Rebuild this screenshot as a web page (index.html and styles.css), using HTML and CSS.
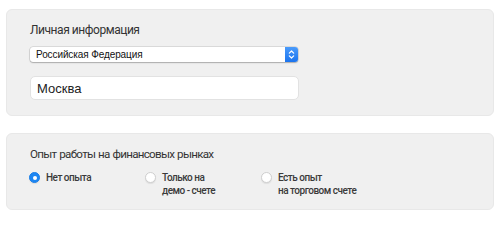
FILE: index.html
```html
<!DOCTYPE html>
<html lang="ru">
<head>
<meta charset="utf-8">
<link rel="stylesheet" href="styles.css">
</head>
<body>
<section class="panel panel-personal">
  <h2 class="panel-title title-personal">Личная информация</h2>
  <div class="select">
    <span class="select-value">Российская Федерация</span>
    <span class="select-arrow">
      <svg width="13" height="15" viewBox="0 0 13 15"><path d="M4.3 6.2 L6.5 4 L8.7 6.2 M4.3 8.8 L6.5 11 L8.7 8.8" fill="none" stroke="#fff" stroke-width="1.2" stroke-linecap="round" stroke-linejoin="round"/></svg>
    </span>
  </div>
  <div class="input">Москва</div>
</section>
<section class="panel panel-exp">
  <h2 class="panel-title title-exp">Опыт работы на финансовых рынках</h2>
  <div class="radios">
    <label class="radio-item"><span class="radio checked"></span><span class="radio-label">Нет опыта</span></label>
    <label class="radio-item"><span class="radio"></span><span class="radio-label">Только на<br>демо - счете</span></label>
    <label class="radio-item"><span class="radio"></span><span class="radio-label">Есть опыт<br>на торговом счете</span></label>
  </div>
</section>
</body>
</html>
```
FILE: styles.css
```css
html, body { margin: 0; padding: 0; background: #fff; }
body { padding: 9px 6px 0 6px; font-family: Roboto, "Liberation Sans", sans-serif; color: #333; }
.panel {
  background: #f0f0f0;
  border: 1px solid #e8e8e8;
  border-radius: 6px;
  box-sizing: border-box;
  width: 488px;
  padding: 13px 23px 0 23px;
}
.panel-personal { height: 107px; }
.panel-exp { margin-top: 17px; height: 77px; }
.panel-title {
  margin: 0;
  font-size: 12px;
  line-height: 15px;
  font-weight: 400;
  color: #333;
}
.title-personal { letter-spacing: -0.45px; }
.title-exp { font-size: 11.6px; letter-spacing: -0.7px; word-spacing: 0.6px; }
.select {
  margin-top: 9px;
  width: 268px;
  height: 15px;
  background: #fff;
  border-radius: 3px;
  box-shadow: 0 0 0 0.5px rgba(0,0,0,0.18), 0 1px 1.5px rgba(0,0,0,0.22);
  display: flex;
  align-items: center;
  justify-content: space-between;
  font-family: "Liberation Sans", Arial, sans-serif;
  font-size: 10px;
  color: #111;
}
.select-value { padding-left: 6px; letter-spacing: -0.1px; }
.select-arrow {
  width: 13px;
  height: 15px;
  display: flex;
  border-radius: 0 3px 3px 0;
  background: linear-gradient(#4a9bfb, #1b74ee);
}
.input {
  margin-top: 14px;
  width: 269px;
  height: 24px;
  box-sizing: border-box;
  background: #fff;
  border: 1px solid #e2e2e2;
  border-radius: 5px;
  padding-left: 6px;
  display: flex;
  align-items: center;
  font-family: "Liberation Sans", Arial, sans-serif;
  font-size: 13px;
  color: #222;
}
.radios {
  margin-top: 9px;
  display: grid;
  grid-template-columns: 116px 116px 116px;
  margin-left: -1px;
}
.radio-item { display: flex; align-items: flex-start; gap: 6px; }
.radio {
  width: 11px;
  height: 11px;
  margin-top: 1px;
  border-radius: 50%;
  box-sizing: border-box;
  background: #fff;
  border: 1px solid #cfcfcf;
  box-shadow: 0 1px 1px rgba(0,0,0,0.08);
  flex: none;
  display: flex;
  align-items: center;
  justify-content: center;
}
.radio.checked { background: #1d86f2; border-color: #1a7fe9; }
.radio.checked::after { content: ""; width: 4px; height: 4px; border-radius: 50%; background: #fff; }
.radio-label {
  font-size: 10px;
  line-height: 13px;
  font-weight: 500;
  letter-spacing: -0.5px;
  color: #3a3a3a;
}
```
